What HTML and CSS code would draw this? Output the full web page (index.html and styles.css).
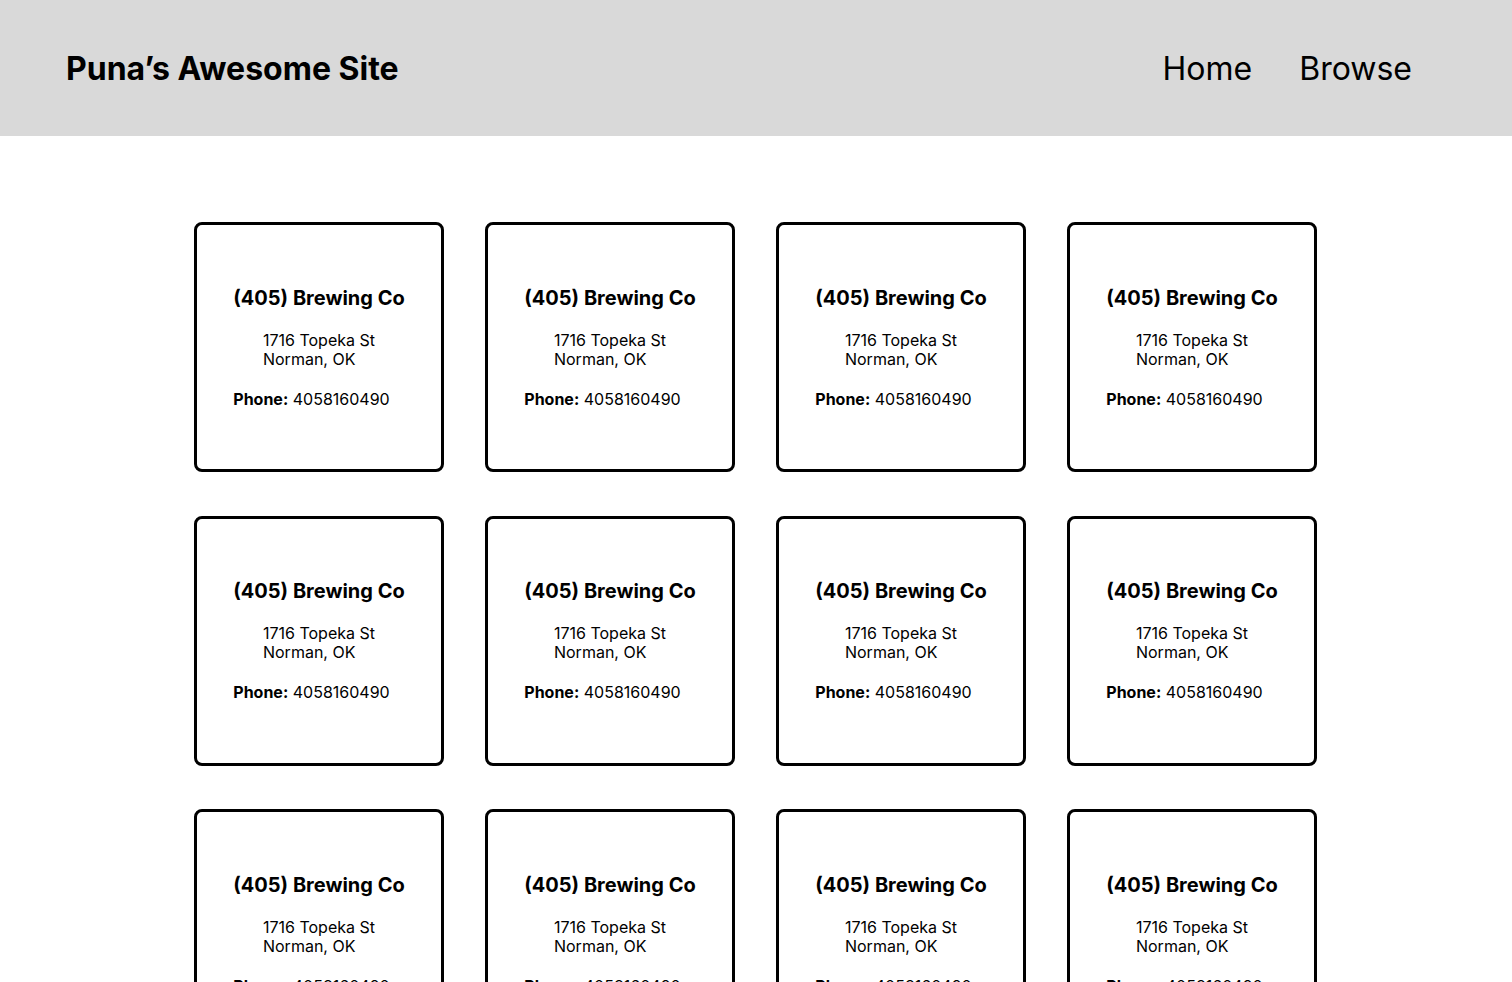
FILE: index.html
```html
<!DOCTYPE html>
<html lang="en">
<head>
<meta charset="utf-8">
<title>Puna’s Awesome Site</title>
<link rel="stylesheet" href="styles.css">
</head>
<body>
<header class="site-header">
  <h1 class="site-title">Puna’s Awesome Site</h1>
  <nav class="site-nav">
    <a href="#" class="nav-link">Home</a>
    <a href="#" class="nav-link">Browse</a>
  </nav>
</header>
<main class="content">
  <div class="grid">
    <div class="card"><div class="card-body"><h2 class="card-title">(405) Brewing Co</h2><p class="card-address">1716 Topeka St<br>Norman, OK</p><p class="card-phone"><b>Phone:</b> 4058160490</p></div></div>
    <div class="card"><div class="card-body"><h2 class="card-title">(405) Brewing Co</h2><p class="card-address">1716 Topeka St<br>Norman, OK</p><p class="card-phone"><b>Phone:</b> 4058160490</p></div></div>
    <div class="card"><div class="card-body"><h2 class="card-title">(405) Brewing Co</h2><p class="card-address">1716 Topeka St<br>Norman, OK</p><p class="card-phone"><b>Phone:</b> 4058160490</p></div></div>
    <div class="card"><div class="card-body"><h2 class="card-title">(405) Brewing Co</h2><p class="card-address">1716 Topeka St<br>Norman, OK</p><p class="card-phone"><b>Phone:</b> 4058160490</p></div></div>
    <div class="card"><div class="card-body"><h2 class="card-title">(405) Brewing Co</h2><p class="card-address">1716 Topeka St<br>Norman, OK</p><p class="card-phone"><b>Phone:</b> 4058160490</p></div></div>
    <div class="card"><div class="card-body"><h2 class="card-title">(405) Brewing Co</h2><p class="card-address">1716 Topeka St<br>Norman, OK</p><p class="card-phone"><b>Phone:</b> 4058160490</p></div></div>
    <div class="card"><div class="card-body"><h2 class="card-title">(405) Brewing Co</h2><p class="card-address">1716 Topeka St<br>Norman, OK</p><p class="card-phone"><b>Phone:</b> 4058160490</p></div></div>
    <div class="card"><div class="card-body"><h2 class="card-title">(405) Brewing Co</h2><p class="card-address">1716 Topeka St<br>Norman, OK</p><p class="card-phone"><b>Phone:</b> 4058160490</p></div></div>
    <div class="card"><div class="card-body"><h2 class="card-title">(405) Brewing Co</h2><p class="card-address">1716 Topeka St<br>Norman, OK</p><p class="card-phone"><b>Phone:</b> 4058160490</p></div></div>
    <div class="card"><div class="card-body"><h2 class="card-title">(405) Brewing Co</h2><p class="card-address">1716 Topeka St<br>Norman, OK</p><p class="card-phone"><b>Phone:</b> 4058160490</p></div></div>
    <div class="card"><div class="card-body"><h2 class="card-title">(405) Brewing Co</h2><p class="card-address">1716 Topeka St<br>Norman, OK</p><p class="card-phone"><b>Phone:</b> 4058160490</p></div></div>
    <div class="card"><div class="card-body"><h2 class="card-title">(405) Brewing Co</h2><p class="card-address">1716 Topeka St<br>Norman, OK</p><p class="card-phone"><b>Phone:</b> 4058160490</p></div></div>
  </div>
</main>
</body>
</html>
```
FILE: styles.css
```css
* { box-sizing: border-box; }
html, body { margin: 0; padding: 0; }
body {
  font-family: Inter, "Noto Sans", sans-serif;
  color: #000;
  background: #fff;
}
.site-header {
  height: 136px;
  background: #d9d9d9;
  display: flex;
  align-items: center;
  justify-content: space-between;
  padding: 0 100px 0 66px;
}
.site-title {
  margin: 0;
  font-size: 32px;
  font-weight: 700;
}
.site-nav {
  display: flex;
  gap: 47px;
}
.nav-link {
  color: #000;
  text-decoration: none;
  font-size: 32px;
  font-weight: 400;
}
.content {
  padding: 86px 1px 40px 0;
  display: flex;
  justify-content: center;
}
.grid {
  display: grid;
  grid-template-columns: repeat(4, 250px);
  column-gap: 41px;
  row-gap: 43.5px;
}
.card {
  width: 250px;
  height: 250px;
  border: 3px solid #000;
  border-radius: 8px;
  display: flex;
  align-items: center;
  justify-content: center;
}
.card-body {
  display: flex;
  flex-direction: column;
  align-items: stretch;
}
.card-title {
  margin: 0;
  font-size: 20px;
  font-weight: 700;
  text-align: center;
  line-height: 24px;
}
.card-address {
  margin: 21px 0 0;
  font-size: 16px;
  line-height: 19px;
  align-self: center;
  text-align: left;
}
.card-phone {
  margin: 21px 0 0;
  font-size: 16px;
  line-height: 19px;
}
.card-phone b { font-weight: 700; }
```
